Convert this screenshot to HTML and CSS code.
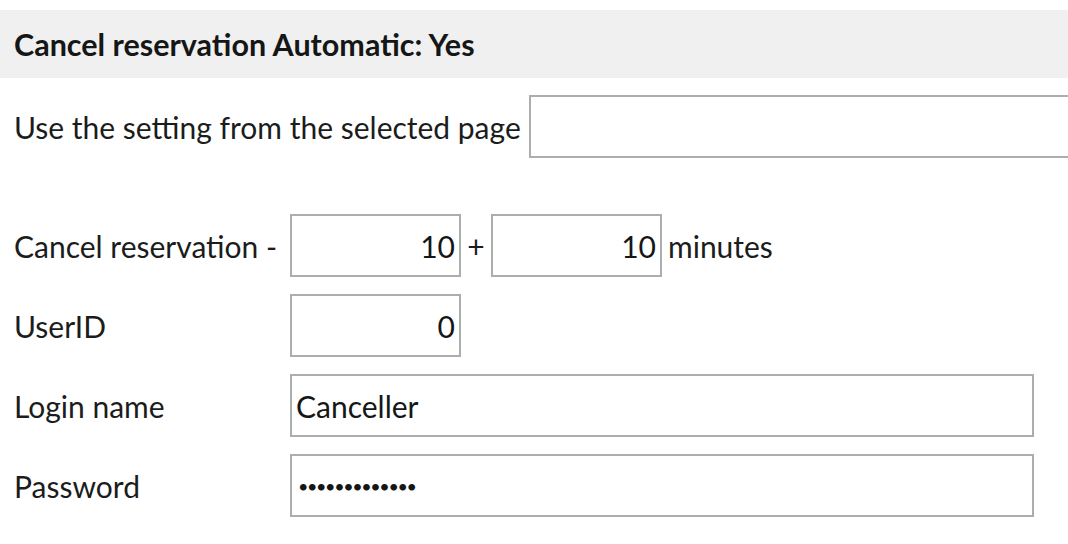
FILE: index.html
```html
<!DOCTYPE html>
<html lang="en">
<head>
<meta charset="utf-8">
<title>Cancel reservation</title>
<link rel="stylesheet" href="styles.css">
</head>
<body>
<div class="page">
  <div class="section-header">Cancel reservation Automatic: Yes</div>
  <div class="source-row">
    <span class="label">Use the setting from the selected page</span>
    <input class="field field-wide" type="text" value="">
  </div>
  <div class="form-grid">
    <label class="label">Cancel reservation -</label>
    <div class="field-group">
      <input class="field field-num" type="text" value="10">
      <span class="op">+</span>
      <input class="field field-num" type="text" value="10">
      <span class="unit">minutes</span>
    </div>

    <label class="label">UserID</label>
    <div class="field-group">
      <input class="field field-num" type="text" value="0">
    </div>

    <label class="label">Login name</label>
    <div class="field-group">
      <input class="field field-long" type="text" value="Canceller">
    </div>

    <label class="label">Password</label>
    <div class="field-group">
      <input class="field field-long field-pass" type="password" value="canceller1234">
    </div>
  </div>
</div>
</body>
</html>
```
FILE: styles.css
```css
html, body {
  margin: 0;
  padding: 0;
  background: #ffffff;
  overflow: hidden;
}

body {
  font-family: "Lato", "Noto Sans", sans-serif;
  font-size: 30px;
  color: #1b1c1c;
}

.page {
  padding-top: 10px;
}

.section-header {
  height: 68px;
  background: #f0f0f0;
  display: flex;
  align-items: center;
  padding-left: 14px;
  font-weight: 700;
  font-size: 30.5px;
  color: #151616;
}

.source-row {
  display: flex;
  align-items: center;
  margin-top: 17px;
  padding-left: 14px;
  white-space: nowrap;
  overflow: hidden;
}

.source-row .field-wide {
  margin-left: 8px;
  flex: 1 0 auto;
  margin-right: -4px;
}

.label {
  white-space: nowrap;
}

.field {
  box-sizing: border-box;
  height: 63px;
  border: 2px solid #aaaeac;
  border-radius: 0;
  background: #ffffff;
  font-family: "Lato", "Noto Sans", sans-serif;
  font-size: 30px;
  color: #151616;
  padding: 0 4px;
  margin: 0;
  outline: none;
}

.field-wide {
  width: 520px;
}

.field-num {
  width: 171px;
  text-align: right;
}

.field-long {
  width: 744px;
}

.field-pass {
  font-size: 18px;
  letter-spacing: -1.4px;
  padding-left: 6px;
}

.form-grid {
  display: grid;
  grid-template-columns: 276px auto;
  grid-auto-rows: 63px;
  row-gap: 17px;
  align-items: center;
  margin-top: 56px;
  padding-left: 14px;
}

.field-group {
  display: flex;
  align-items: center;
  gap: 6px;
}

.op {
  width: 18px;
  text-align: center;
}
```
